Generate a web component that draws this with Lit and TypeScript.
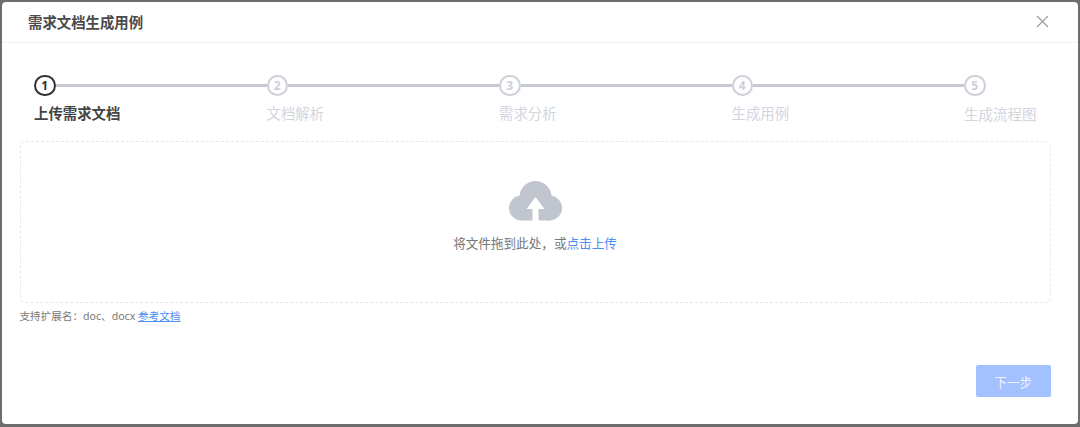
import { LitElement, html, css } from "lit";
import { customElement } from "lit/decorators.js";

const STEPS = ["上传需求文档", "文档解析", "需求分析", "生成用例", "生成流程图"];

@customElement("app-root")
export class AppRoot extends LitElement {
  static styles = css`
    :host {
      display: block;
      width: 1080px;
      height: 427px;
      box-sizing: border-box;
      padding: 2px 2px 3px 2px;
      background: #6e6e6e;
      font-family: "Noto Sans", "Noto Sans CJK SC", sans-serif;
      overflow: hidden;
    }
    .modal {
      height: 100%;
      background: #fff;
      border-radius: 4px;
      display: flex;
      flex-direction: column;
    }
    .header {
      height: 41px;
      box-sizing: border-box;
      border-bottom: 1px solid #eff0f2;
      display: flex;
      align-items: center;
      justify-content: space-between;
      padding: 0 29.5px 2px 26px;
      flex: none;
    }
    .title {
      font-size: 14.4px;
      font-weight: 700;
      color: #4a4a4a;
    }
    .close {
      width: 13px;
      height: 13px;
      display: block;
    }
    .steps {
      display: flex;
      padding: 31.5px 41px 0 32px;
      flex: none;
    }
    .step {
      flex: 1 1 0;
      min-width: 0;
    }
    .step.last {
      flex: 0 0 73px;
    }
    .head {
      display: flex;
      align-items: center;
      height: 22px;
    }
    .num {
      width: 21.5px;
      height: 21.5px;
      box-sizing: border-box;
      border: 2px solid #cdcfda;
      border-radius: 50%;
      display: flex;
      align-items: center;
      justify-content: center;
      font-size: 12px;
      font-weight: 700;
      color: #cdcfda;
      flex: none;
    }
    .line {
      flex: 1;
      height: 2.5px;
      background: #c6c8d3;
    }
    .label {
      margin-top: 7.5px;
      font-size: 14.4px;
      line-height: 20px;
      color: #d3d5de;
      white-space: nowrap;
    }
    .step.last .label {
      font-size: 14.5px;
    }
    .step.active .num {
      border-color: #303133;
      color: #303133;
    }
    .step.active .label {
      color: #444;
      font-weight: 700;
    }
    .body {
      padding: 0 27.5px 0 17.5px;
      margin-top: 17px;
      flex: none;
    }
    .drop {
      height: 162px;
      box-sizing: border-box;
      border: 1px dashed #e6e7ea;
      border-radius: 6px;
      display: flex;
      flex-direction: column;
      align-items: center;
      padding-top: 39px;
    }
    .cloud {
      width: 53px;
      height: 40px;
      display: block;
    }
    .hint {
      margin-top: 14px;
      font-size: 12.6px;
      line-height: 18px;
      color: #777;
      white-space: nowrap;
    }
    .hint span {
      color: #4d8df7;
    }
    .tip {
      margin-top: 5px;
      font-size: 10.6px;
      line-height: 16px;
      color: #777;
      white-space: nowrap;
    }
    .tip a {
      color: #4d8df7;
      text-decoration: underline;
    }
    .footer {
      margin-top: auto;
      padding: 0 27.5px 27px 0;
      display: flex;
      justify-content: flex-end;
    }
    .next {
      width: 74.5px;
      height: 32px;
      border: none;
      border-radius: 2px;
      background: #a3c0ff;
      color: #eef3ff;
      font-family: inherit;
      font-size: 12.6px;
      padding: 0;
    }
  `;

  render() {
    return html`
      <div class="modal">
        <div class="header">
          <div class="title">需求文档生成用例</div>
          <svg class="close" viewBox="0 0 13 13" fill="none" stroke="#9a9a9a" stroke-width="1.1">
            <path d="M1 1 L12 12 M12 1 L1 12"></path>
          </svg>
        </div>
        <div class="steps">
          ${STEPS.map(
            (s, i) => html`
              <div class="step ${i === 0 ? "active" : ""} ${i === STEPS.length - 1 ? "last" : ""}">
                <div class="head">
                  <div class="num">${i + 1}</div>
                  ${i < STEPS.length - 1 ? html`<div class="line"></div>` : ""}
                </div>
                <div class="label">${s}</div>
              </div>
            `
          )}
        </div>
        <div class="body">
          <div class="drop">
            <svg class="cloud" viewBox="0 0 53 40">
              <g fill="#c1c5ce">
                <circle cx="26.5" cy="16" r="16"></circle>
                <circle cx="12.5" cy="27" r="12.5"></circle>
                <circle cx="40.5" cy="27" r="12.5"></circle>
                <rect x="12" y="20" width="29" height="19.5"></rect>
              </g>
              <path fill="#fff" d="M26.5 16 L35.5 28 H29.5 V40 H23.5 V28 H17.5 Z"></path>
            </svg>
            <div class="hint">将文件拖到此处，或<span>点击上传</span></div>
          </div>
          <div class="tip">支持扩展名：doc、docx <a>参考文档</a></div>
        </div>
        <div class="footer">
          <button class="next">下一步</button>
        </div>
      </div>
    `;
  }
}
